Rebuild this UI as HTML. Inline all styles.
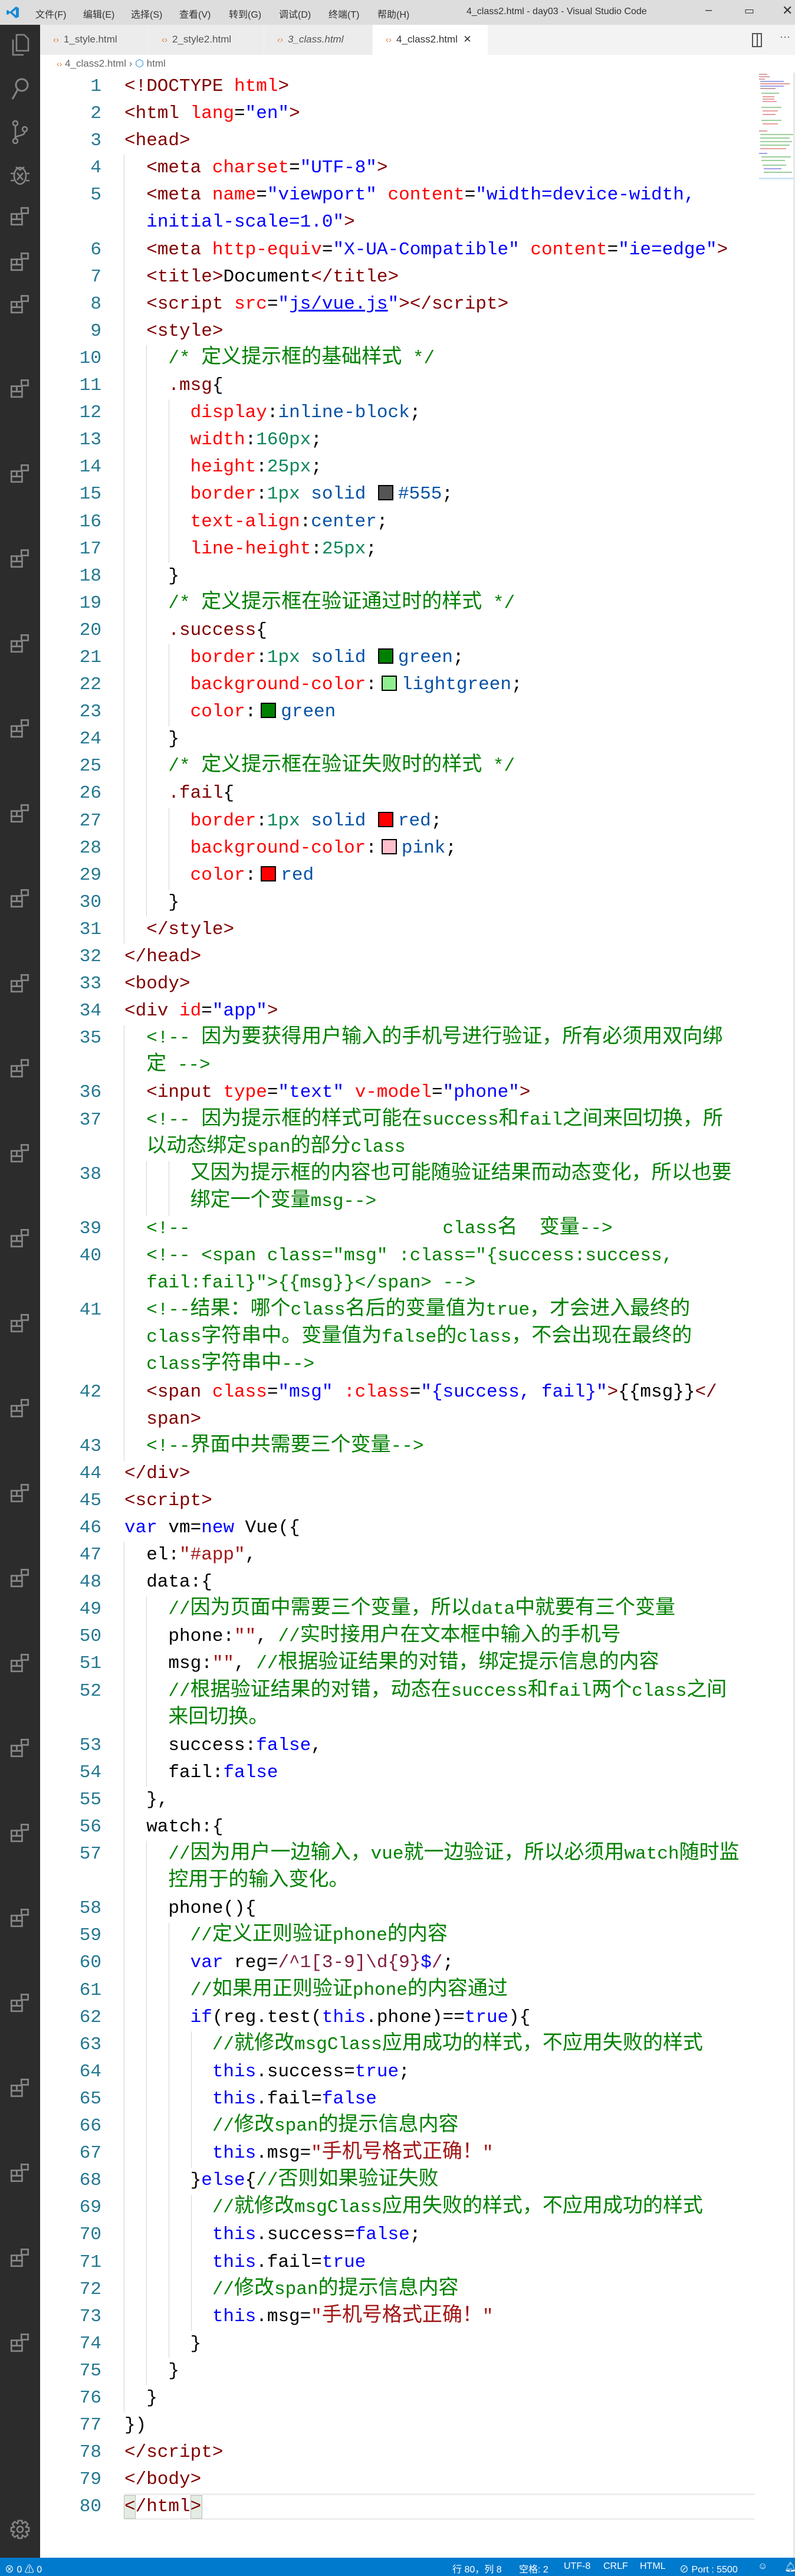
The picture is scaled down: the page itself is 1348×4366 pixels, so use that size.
<!DOCTYPE html>
<html><head><meta charset="utf-8">
<style>
*{margin:0;padding:0;box-sizing:border-box}
body{width:1348px;height:4366px;position:relative;background:#fff;overflow:hidden;font-family:"Liberation Sans","Noto Sans CJK SC",sans-serif}
#title{position:absolute;left:0;top:0;width:1348px;height:42px;background:#dddddd;color:#333;font-size:16px}
#title span{position:absolute;top:11px}
#act{position:absolute;left:0;top:42px;width:68px;height:4293px;background:#2c2c2c}
#tabs{position:absolute;left:68px;top:42px;width:1280px;height:51px;background:#f3f3f3}
.tab{position:absolute;top:0;height:51px;background:#ececec;border-right:1px solid #f3f3f3;font-size:17px;color:#555;padding:15px 0 0 22px}
.tab b{color:#e37933;font-weight:normal;margin-right:8px;font-size:15px}
#crumb{position:absolute;left:96px;top:98px;font-size:17px;color:#666}
#crumb b{color:#e37933;font-weight:normal;font-size:14px}
pre,#code{font-family:"Liberation Mono","Noto Sans CJK SC",monospace;font-size:31px;line-height:46.1px}
#nums{position:absolute;left:90px;top:124px;width:82px;text-align:right;color:#237893}
#code{position:absolute;left:211px;top:124px;color:#000;width:1080px}
#code div{height:46.1px;white-space:pre;overflow:visible}
i{font-style:normal;font-size:34px;font-family:"Noto Sans CJK SC",sans-serif;line-height:0}
.t{color:#800000}.a{color:#ff0000}.v{color:#0000ff}.c{color:#008000}.p{color:#ff0000}.n{color:#0451a5}.m{color:#098658}.k{color:#0000ff}.s{color:#a31515}.r{color:#811f3f}
.sw{display:inline-block;width:26px;height:26px;border:2px solid #000;vertical-align:-3px;margin:0 8px}
.g{position:absolute;width:1px;background:#d3d3d3}
#status{position:absolute;left:0;top:4335px;width:1348px;height:31px;background:#007acc;color:#fff;font-size:16px}
#status span{position:absolute;top:6px}
#mini{position:absolute;left:1287px;top:123px;width:58px;height:182px}
#mini div{position:absolute;height:2px}
</style></head><body>
<svg width="0" height="0" style="position:absolute">
<defs>
<symbol id="ext" viewBox="0 0 30 30"><g fill="none" stroke="#858585" stroke-width="2.4"><rect x="2" y="12" width="8" height="8"/><rect x="10" y="12" width="8" height="8"/><rect x="17" y="3" width="10" height="8"/><rect x="2" y="20" width="16" height="8"/></g></symbol>
</defs></svg>

<div id="title">
<svg style="position:absolute;left:10px;top:9px" width="24" height="24" viewBox="0 0 24 24"><path d="M17 2 L22 4.5 V19.5 L17 22 L7 13 L3 16 L1 15 V9 L3 8 L7 11 Z M17 7 L11 12 L17 17 Z" fill="#1a8ad8"/></svg>
<span style="left:60px">文件(F)</span><span style="left:141px">编辑(E)</span><span style="left:222px">选择(S)</span><span style="left:304px">查看(V)</span><span style="left:388px">转到(G)</span><span style="left:473px">调试(D)</span><span style="left:557px">终端(T)</span><span style="left:640px">帮助(H)</span>
<span style="left:791px">4_class2.html - day03 - Visual Studio Code</span>
<span style="left:1196px;top:6px;font-size:20px">–</span><span style="left:1262px;top:8px;font-size:18px">▭</span><span style="left:1326px;top:5px;font-size:22px">✕</span>
</div>

<div id="act">
<svg style="position:absolute;left:17px;top:14px" width="34" height="40" viewBox="0 0 34 40"><g fill="none" stroke="#858585" stroke-width="2.6"><path d="M11 3 H24 L31 10 V30 H11 Z"/><path d="M5 11 V37 H23"/></g></svg>
<svg style="position:absolute;left:18px;top:88px" width="32" height="42" viewBox="0 0 32 42"><g fill="none" stroke="#858585" stroke-width="3"><circle cx="19" cy="14" r="10"/><path d="M12 22 L3 38"/></g></svg>
<svg style="position:absolute;left:18px;top:160px" width="32" height="44" viewBox="0 0 32 44"><g fill="none" stroke="#858585" stroke-width="2.6"><circle cx="8" cy="7" r="4"/><circle cx="8" cy="37" r="4"/><circle cx="24" cy="17" r="4"/><path d="M8 11 V33 M24 21 C24 30 8 26 8 33"/></g></svg>
<svg style="position:absolute;left:16px;top:232px" width="36" height="42" viewBox="0 0 36 42"><g fill="none" stroke="#858585" stroke-width="2.6"><ellipse cx="18" cy="24" rx="10" ry="14"/><path d="M11 9 L18 14 L25 9 M8 20 H2 M28 20 H34 M8 32 H2 M28 32 H34 M13 19 L23 31 M23 19 L13 31"/></g></svg>
<svg style="position:absolute;left:17px;top:307px" width="34" height="34"><use href="#ext"/></svg>
<svg style="position:absolute;left:17px;top:384px" width="34" height="34"><use href="#ext"/></svg>
<svg style="position:absolute;left:17px;top:456px" width="34" height="34"><use href="#ext"/></svg>
<svg style="position:absolute;left:17px;top:599px" width="34" height="34"><use href="#ext"/></svg>
<svg style="position:absolute;left:17px;top:743px" width="34" height="34"><use href="#ext"/></svg>
<svg style="position:absolute;left:17px;top:887px" width="34" height="34"><use href="#ext"/></svg>
<svg style="position:absolute;left:17px;top:1031px" width="34" height="34"><use href="#ext"/></svg>
<svg style="position:absolute;left:17px;top:1175px" width="34" height="34"><use href="#ext"/></svg>
<svg style="position:absolute;left:17px;top:1319px" width="34" height="34"><use href="#ext"/></svg>
<svg style="position:absolute;left:17px;top:1463px" width="34" height="34"><use href="#ext"/></svg>
<svg style="position:absolute;left:17px;top:1607px" width="34" height="34"><use href="#ext"/></svg>
<svg style="position:absolute;left:17px;top:1751px" width="34" height="34"><use href="#ext"/></svg>
<svg style="position:absolute;left:17px;top:1895px" width="34" height="34"><use href="#ext"/></svg>
<svg style="position:absolute;left:17px;top:2039px" width="34" height="34"><use href="#ext"/></svg>
<svg style="position:absolute;left:17px;top:2183px" width="34" height="34"><use href="#ext"/></svg>
<svg style="position:absolute;left:17px;top:2327px" width="34" height="34"><use href="#ext"/></svg>
<svg style="position:absolute;left:17px;top:2471px" width="34" height="34"><use href="#ext"/></svg>
<svg style="position:absolute;left:17px;top:2615px" width="34" height="34"><use href="#ext"/></svg>
<svg style="position:absolute;left:17px;top:2759px" width="34" height="34"><use href="#ext"/></svg>
<svg style="position:absolute;left:17px;top:2903px" width="34" height="34"><use href="#ext"/></svg>
<svg style="position:absolute;left:17px;top:3047px" width="34" height="34"><use href="#ext"/></svg>
<svg style="position:absolute;left:17px;top:3191px" width="34" height="34"><use href="#ext"/></svg>
<svg style="position:absolute;left:17px;top:3335px" width="34" height="34"><use href="#ext"/></svg>
<svg style="position:absolute;left:17px;top:3479px" width="34" height="34"><use href="#ext"/></svg>
<svg style="position:absolute;left:17px;top:3623px" width="34" height="34"><use href="#ext"/></svg>
<svg style="position:absolute;left:17px;top:3767px" width="34" height="34"><use href="#ext"/></svg>
<svg style="position:absolute;left:17px;top:3911px" width="34" height="34"><use href="#ext"/></svg>
<svg style="position:absolute;left:16px;top:4227px" width="36" height="36" viewBox="0 0 36 36"><g fill="none" stroke="#858585" stroke-width="2.6"><circle cx="18" cy="18" r="5"/><path d="M15 3 H21 L22 8 L27 5 L31 9 L28 14 L33 15 V21 L28 22 L31 27 L27 31 L22 28 L21 33 H15 L14 28 L9 31 L5 27 L8 22 L3 21 V15 L8 14 L5 9 L9 5 L14 8 Z"/></g></svg>
</div>

<div id="tabs">
<div class="tab" style="left:0;width:184px"><b>‹›</b>1_style.html</div>
<div class="tab" style="left:184px;width:196px"><b>‹›</b>2_style2.html</div>
<div class="tab" style="left:380px;width:184px;font-style:italic"><b>‹›</b>3_class.html</div>
<div class="tab" style="left:564px;width:196px;background:#fff;color:#333"><b>‹›</b>4_class2.html&nbsp;&nbsp;✕</div>
<div style="position:absolute;left:1207px;top:14px;width:17px;height:24px;border:2px solid #555"><div style="position:absolute;left:6px;top:0;width:2px;height:20px;background:#555"></div></div>
<div style="position:absolute;left:1254px;top:10px;font-size:18px;color:#555">···</div>
</div>
<div id="crumb"><b>‹›</b> 4_class2.html › <span style="color:#1a8ad8">⬡</span> html</div>

<div class="g" style="left:210px;top:262px;height:1337px"></div>
<div class="g" style="left:248px;top:585px;height:968px"></div>
<div class="g" style="left:286px;top:677px;height:277px"></div>
<div class="g" style="left:286px;top:1092px;height:139px"></div>
<div class="g" style="left:286px;top:1369px;height:139px"></div>
<div class="g" style="left:210px;top:1738px;height:738px"></div>
<div class="g" style="left:248px;top:1968px;height:93px"></div>
<div class="g" style="left:286px;top:1968px;height:93px"></div>
<div class="g" style="left:210px;top:2613px;height:1476px"></div>
<div class="g" style="left:248px;top:2706px;height:322px"></div>
<div class="g" style="left:248px;top:3120px;height:922px"></div>
<div class="g" style="left:286px;top:3259px;height:737px"></div>
<div class="g" style="left:324px;top:3443px;height:231px"></div>
<div class="g" style="left:324px;top:3720px;height:231px"></div>

<div style="position:absolute;left:211px;top:4226px;width:1069px;height:45px;border-top:3px solid #eeeeee;border-bottom:3px solid #eeeeee"></div>
<div style="position:absolute;left:210px;top:4229px;width:20px;height:40px;background:#e3ece3;border:1px solid #b9b9b9"></div>
<div style="position:absolute;left:323px;top:4229px;width:20px;height:40px;background:#e3ece3;border:1px solid #b9b9b9"></div>

<pre id="nums">1
2
3
4
5

6
7
8
9
10
11
12
13
14
15
16
17
18
19
20
21
22
23
24
25
26
27
28
29
30
31
32
33
34
35

36
37

38

39
40

41


42

43
44
45
46
47
48
49
50
51
52

53
54
55
56
57

58
59
60
61
62
63
64
65
66
67
68
69
70
71
72
73
74
75
76
77
78
79
80</pre>

<div id="code">
<div><span class="t">&lt;!DOCTYPE</span> <span class="a">html</span><span class="t">&gt;</span></div>
<div><span class="t">&lt;html</span> <span class="a">lang</span>=<span class="v">"en"</span><span class="t">&gt;</span></div>
<div><span class="t">&lt;head&gt;</span></div>
<div>  <span class="t">&lt;meta</span> <span class="a">charset</span>=<span class="v">"UTF-8"</span><span class="t">&gt;</span></div>
<div>  <span class="t">&lt;meta</span> <span class="a">name</span>=<span class="v">"viewport"</span> <span class="a">content</span>=<span class="v">"width=device-width,</span></div>
<div>  <span class="v">initial-scale=1.0"</span><span class="t">&gt;</span></div>
<div>  <span class="t">&lt;meta</span> <span class="a">http-equiv</span>=<span class="v">"X-UA-Compatible"</span> <span class="a">content</span>=<span class="v">"ie=edge"</span><span class="t">&gt;</span></div>
<div>  <span class="t">&lt;title&gt;</span>Document<span class="t">&lt;/title&gt;</span></div>
<div>  <span class="t">&lt;script</span> <span class="a">src</span>=<span class="v">"<u>js/vue.js</u>"</span><span class="t">&gt;&lt;/script&gt;</span></div>
<div>  <span class="t">&lt;style&gt;</span></div>
<div>    <span class="c">/* <i>定义提示框的基础样式</i> */</span></div>
<div>    <span class="t">.msg</span>{</div>
<div>      <span class="p">display</span>:<span class="n">inline-block</span>;</div>
<div>      <span class="p">width</span>:<span class="m">160px</span>;</div>
<div>      <span class="p">height</span>:<span class="m">25px</span>;</div>
<div>      <span class="p">border</span>:<span class="m">1px</span> <span class="n">solid</span> <span class="sw" style="background:#555;margin-left:2px"></span><span class="n">#555</span>;</div>
<div>      <span class="p">text-align</span>:<span class="n">center</span>;</div>
<div>      <span class="p">line-height</span>:<span class="m">25px</span>;</div>
<div>    }</div>
<div>    <span class="c">/* <i>定义提示框在验证通过时的样式</i> */</span></div>
<div>    <span class="t">.success</span>{</div>
<div>      <span class="p">border</span>:<span class="m">1px</span> <span class="n">solid</span> <span class="sw" style="background:green;margin-left:2px"></span><span class="n">green</span>;</div>
<div>      <span class="p">background-color</span>:<span class="sw" style="background:lightgreen"></span><span class="n">lightgreen</span>;</div>
<div>      <span class="p">color</span>:<span class="sw" style="background:green"></span><span class="n">green</span></div>
<div>    }</div>
<div>    <span class="c">/* <i>定义提示框在验证失败时的样式</i> */</span></div>
<div>    <span class="t">.fail</span>{</div>
<div>      <span class="p">border</span>:<span class="m">1px</span> <span class="n">solid</span> <span class="sw" style="background:red;margin-left:2px"></span><span class="n">red</span>;</div>
<div>      <span class="p">background-color</span>:<span class="sw" style="background:pink"></span><span class="n">pink</span>;</div>
<div>      <span class="p">color</span>:<span class="sw" style="background:red"></span><span class="n">red</span></div>
<div>    }</div>
<div>  <span class="t">&lt;/style&gt;</span></div>
<div><span class="t">&lt;/head&gt;</span></div>
<div><span class="t">&lt;body&gt;</span></div>
<div><span class="t">&lt;div</span> <span class="a">id</span>=<span class="v">"app"</span><span class="t">&gt;</span></div>
<div>  <span class="c">&lt;!-- <i>因为要获得用户输入的手机号进行验证，所有必须用双向绑</i></span></div>
<div>  <span class="c"><i>定</i> --&gt;</span></div>
<div>  <span class="t">&lt;input</span> <span class="a">type</span>=<span class="v">"text"</span> <span class="a">v-model</span>=<span class="v">"phone"</span><span class="t">&gt;</span></div>
<div>  <span class="c">&lt;!-- <i>因为提示框的样式可能在</i>success<i>和</i>fail<i>之间来回切换，所</i></span></div>
<div>  <span class="c"><i>以动态绑定</i>span<i>的部分</i>class</span></div>
<div>      <span class="c"><i>又因为提示框的内容也可能随验证结果而动态变化，所以也要</i></span></div>
<div>      <span class="c"><i>绑定一个变量</i>msg--&gt;</span></div>
<div>  <span class="c">&lt;!--                       class<i>名</i>  <i>变量</i>--&gt;</span></div>
<div>  <span class="c">&lt;!-- &lt;span class="msg" :class="{success:success,</span></div>
<div>  <span class="c">fail:fail}"&gt;{{msg}}&lt;/span&gt; --&gt;</span></div>
<div>  <span class="c">&lt;!--<i>结果：哪个</i>class<i>名后的变量值为</i>true<i>，才会进入最终的</i></span></div>
<div>  <span class="c">class<i>字符串中。变量值为</i>false<i>的</i>class<i>，不会出现在最终的</i></span></div>
<div>  <span class="c">class<i>字符串中</i>--&gt;</span></div>
<div>  <span class="t">&lt;span</span> <span class="a">class</span>=<span class="v">"msg"</span> <span class="a">:class</span>=<span class="v">"{success, fail}"</span><span class="t">&gt;</span>{{msg}}<span class="t">&lt;/</span></div>
<div>  <span class="t">span&gt;</span></div>
<div>  <span class="c">&lt;!--<i>界面中共需要三个变量</i>--&gt;</span></div>
<div><span class="t">&lt;/div&gt;</span></div>
<div><span class="t">&lt;script&gt;</span></div>
<div><span class="k">var</span> vm=<span class="k">new</span> Vue({</div>
<div>  el:<span class="s">"#app"</span>,</div>
<div>  data:{</div>
<div>    <span class="c">//<i>因为页面中需要三个变量，所以</i>data<i>中就要有三个变量</i></span></div>
<div>    phone:<span class="s">""</span>, <span class="c">//<i>实时接用户在文本框中输入的手机号</i></span></div>
<div>    msg:<span class="s">""</span>, <span class="c">//<i>根据验证结果的对错，绑定提示信息的内容</i></span></div>
<div>    <span class="c">//<i>根据验证结果的对错，动态在</i>success<i>和</i>fail<i>两个</i>class<i>之间</i></span></div>
<div>    <span class="c"><i>来回切换。</i></span></div>
<div>    success:<span class="k">false</span>,</div>
<div>    fail:<span class="k">false</span></div>
<div>  },</div>
<div>  watch:{</div>
<div>    <span class="c">//<i>因为用户一边输入，</i>vue<i>就一边验证，所以必须用</i>watch<i>随时监</i></span></div>
<div>    <span class="c"><i>控用于的输入变化。</i></span></div>
<div>    phone(){</div>
<div>      <span class="c">//<i>定义正则验证</i>phone<i>的内容</i></span></div>
<div>      <span class="k">var</span> reg=<span class="r">/^1[3-9]\d{9}</span><span class="k">$</span><span class="r">/</span>;</div>
<div>      <span class="c">//<i>如果用正则验证</i>phone<i>的内容通过</i></span></div>
<div>      <span class="k">if</span>(reg.test(<span class="k">this</span>.phone)==<span class="k">true</span>){</div>
<div>        <span class="c">//<i>就修改</i>msgClass<i>应用成功的样式，不应用失败的样式</i></span></div>
<div>        <span class="k">this</span>.success=<span class="k">true</span>;</div>
<div>        <span class="k">this</span>.fail=<span class="k">false</span></div>
<div>        <span class="c">//<i>修改</i>span<i>的提示信息内容</i></span></div>
<div>        <span class="k">this</span>.msg=<span class="s">"<i>手机号格式正确！</i>"</span></div>
<div>      }<span class="k">else</span>{<span class="c">//<i>否则如果验证失败</i></span></div>
<div>        <span class="c">//<i>就修改</i>msgClass<i>应用失败的样式，不应用成功的样式</i></span></div>
<div>        <span class="k">this</span>.success=<span class="k">false</span>;</div>
<div>        <span class="k">this</span>.fail=<span class="k">true</span></div>
<div>        <span class="c">//<i>修改</i>span<i>的提示信息内容</i></span></div>
<div>        <span class="k">this</span>.msg=<span class="s">"<i>手机号格式正确！</i>"</span></div>
<div>      }</div>
<div>    }</div>
<div>  }</div>
<div>})</div>
<div><span class="t">&lt;/script&gt;</span></div>
<div><span class="t">&lt;/body&gt;</span></div>
<div><span class="t">&lt;/html&gt;</span></div>
</div>

<div id="mini">
<div style="left:0;top:2px;width:14px;background:#d9a0a0"></div>
<div style="left:0;top:6px;width:18px;background:#d9a0a0"></div>
<div style="left:0;top:10px;width:10px;background:#d9a0a0"></div>
<div style="left:2px;top:14px;width:40px;background:#9ea0ea"></div>
<div style="left:2px;top:18px;width:50px;background:#e69a9a"></div>
<div style="left:2px;top:22px;width:40px;background:#a0a0e6"></div>
<div style="left:2px;top:26px;width:26px;background:#c9a0a0"></div>
<div style="left:4px;top:34px;width:30px;background:#9ccf9c"></div>
<div style="left:6px;top:40px;width:20px;background:#e6a0a0"></div>
<div style="left:6px;top:44px;width:20px;background:#e6a0a0"></div>
<div style="left:6px;top:48px;width:24px;background:#e6a0a0"></div>
<div style="left:4px;top:58px;width:34px;background:#9ccf9c"></div>
<div style="left:6px;top:64px;width:26px;background:#e6a0a0"></div>
<div style="left:6px;top:70px;width:22px;background:#e6a0a0"></div>
<div style="left:4px;top:80px;width:34px;background:#9ccf9c"></div>
<div style="left:6px;top:86px;width:26px;background:#e6a0a0"></div>
<div style="left:0;top:98px;width:14px;background:#d9a0a0"></div>
<div style="left:2px;top:104px;width:56px;background:#9ccf9c"></div>
<div style="left:2px;top:110px;width:50px;background:#9ccf9c"></div>
<div style="left:2px;top:116px;width:54px;background:#9ccf9c"></div>
<div style="left:2px;top:122px;width:50px;background:#9ccf9c"></div>
<div style="left:2px;top:128px;width:44px;background:#e6a0a0"></div>
<div style="left:0;top:136px;width:14px;background:#a0a0e6"></div>
<div style="left:4px;top:142px;width:50px;background:#9ccf9c"></div>
<div style="left:4px;top:148px;width:40px;background:#9ccf9c"></div>
<div style="left:6px;top:156px;width:40px;background:#9ccf9c"></div>
<div style="left:8px;top:162px;width:30px;background:#a0a0e6"></div>
<div style="left:8px;top:168px;width:48px;background:#9ccf9c"></div>
<div style="left:0;top:178px;width:58px;height:3px;background:#cfe3f7"></div>
</div>
<div style="position:absolute;left:1345px;top:123px;width:3px;height:4212px;background:#e8e8e8"></div>

<div id="status">
<span style="left:8px">⊗ 0 ⚠ 0</span>
<span style="left:767px">行 80，列 8</span>
<span style="left:880px">空格: 2</span>
<span style="left:956px">UTF-8</span>
<span style="left:1023px">CRLF</span>
<span style="left:1085px">HTML</span>
<span style="left:1152px">⊘ Port : 5500</span>
<span style="left:1285px">☺</span>
<span style="left:1330px">🔔︎</span>
</div>
</body></html>
